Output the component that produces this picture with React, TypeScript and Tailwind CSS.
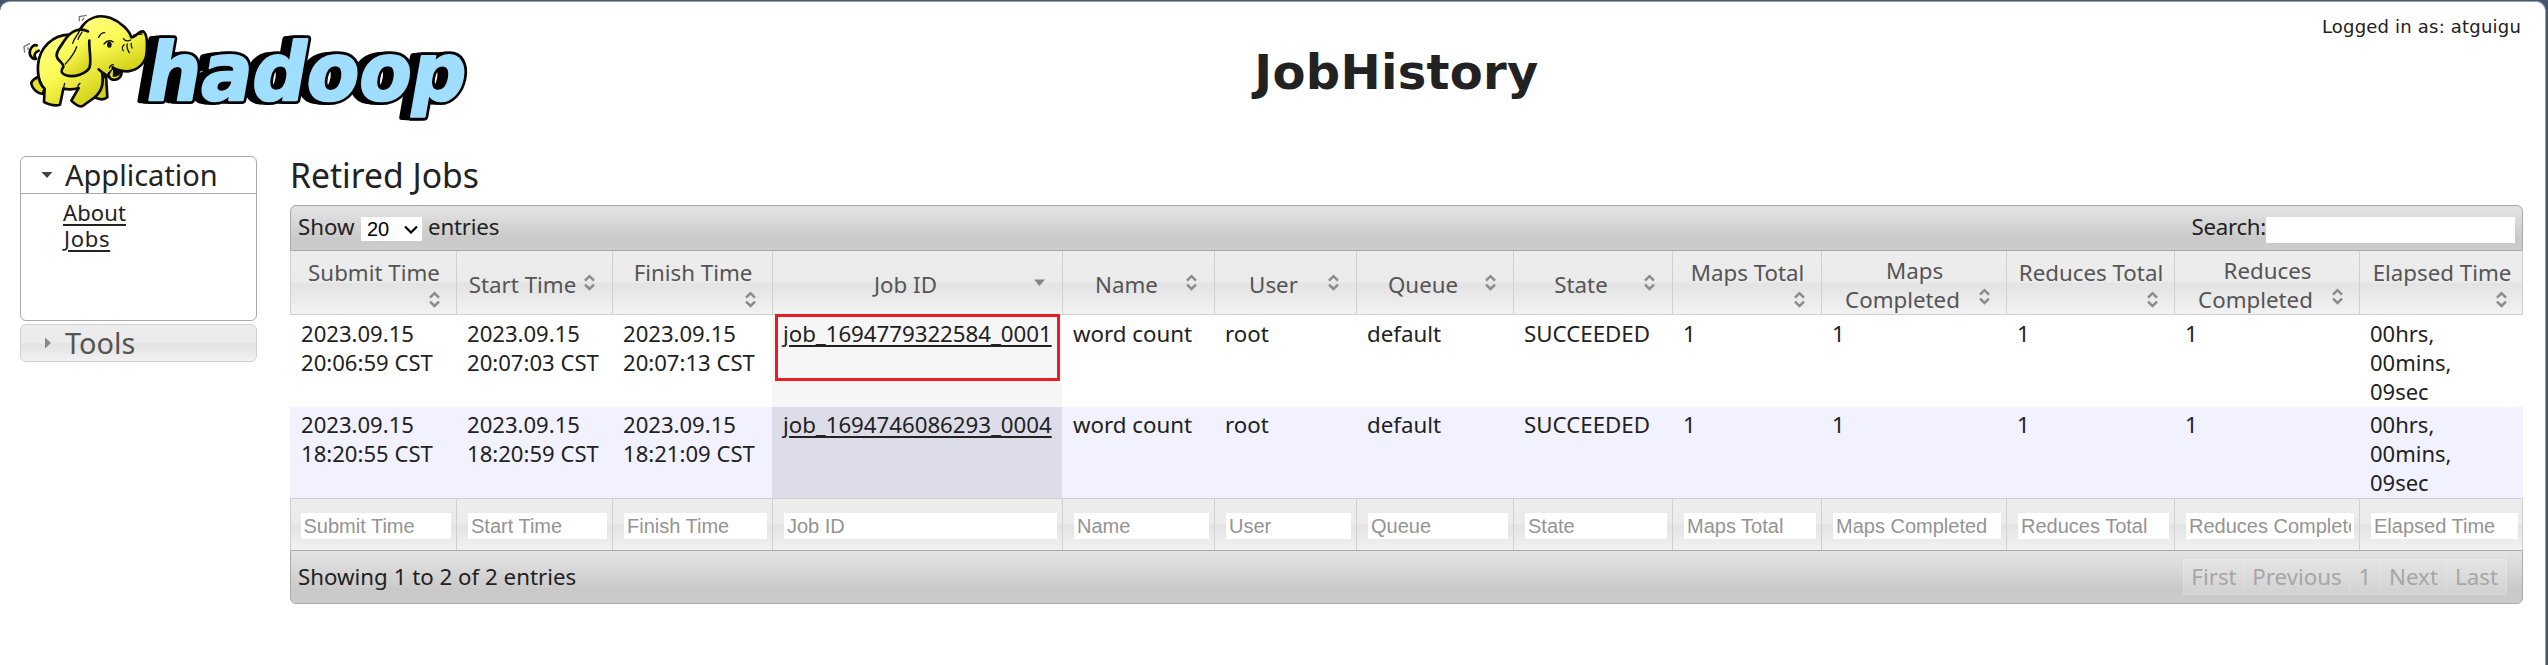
type Variant = "top" | "mid" | "wrap";

const columns: { label: string; variant: Variant }[] = [
  { label: "Submit Time", variant: "top" },
  { label: "Start Time", variant: "mid" },
  { label: "Finish Time", variant: "top" },
  { label: "Job ID", variant: "mid" },
  { label: "Name", variant: "mid" },
  { label: "User", variant: "mid" },
  { label: "Queue", variant: "mid" },
  { label: "State", variant: "mid" },
  { label: "Maps Total", variant: "top" },
  { label: "Maps Completed", variant: "wrap" },
  { label: "Reduces Total", variant: "top" },
  { label: "Reduces Completed", variant: "wrap" },
  { label: "Elapsed Time", variant: "top" },
];

const rows = [
  ["2023.09.15 20:06:59 CST", "2023.09.15 20:07:03 CST", "2023.09.15 20:07:13 CST", "job_1694779322584_0001", "word count", "root", "default", "SUCCEEDED", "1", "1", "1", "1", "00hrs, 00mins, 09sec"],
  ["2023.09.15 18:20:55 CST", "2023.09.15 18:20:59 CST", "2023.09.15 18:21:09 CST", "job_1694746086293_0004", "word count", "root", "default", "SUCCEEDED", "1", "1", "1", "1", "00hrs, 00mins, 09sec"],
];

const GRID = "grid grid-cols-[166px_156px_160px_290px_152px_142px_157px_159px_149px_185px_168px_185px_164px]";
const STRIPE = "bg-[linear-gradient(#ededed_0%,#ebebeb_49%,#e3e3e3_52%,#e9e9e9_72%,#f2f2f2_100%)]";
const BAR = "bg-[linear-gradient(#e3e3e3_0%,#dadada_30%,#c9c9c9_75%,#cccccc_100%)]";

function SortIcon() {
  return (
    <svg width="13" height="17" viewBox="0 0 13 17" className="block" fill="none" stroke="#8b8b8b" strokeWidth="2.5">
      <path d="M2 6.6 6.5 2.2 11 6.6M2 10.6 6.5 15 11 10.6" />
    </svg>
  );
}

function DownIcon() {
  return (
    <svg width="13" height="17" viewBox="0 0 13 17" className="block">
      <path d="M1 5.5H12L6.500 12Z" fill="#858585" />
    </svg>
  );
}

function HeaderCell({ label, variant, active }: { label: string; variant: Variant; active: boolean }) {
  const icon = active ? <DownIcon /> : <SortIcon />;
  if (variant === "top") {
    return (
      <div className="flex flex-col border-l border-[#d0d0d0] pt-[7px]">
        <div className="pl-px text-center">{label}</div>
        <div className="mt-[4px] mr-[15px] self-end">{icon}</div>
      </div>
    );
  }
  if (variant === "mid") {
    return (
      <div className="flex items-start border-l border-[#d0d0d0] pt-[19px]">
        <div className="flex-1 pl-[5px] text-center">{label}</div>
        <div className="mt-[3.500px] mr-4">{icon}</div>
      </div>
    );
  }
  const [a, b] = label.split(" ");
  return (
    <div className="flex flex-col border-l border-[#d0d0d0] pt-[5px]">
      <div className="pl-px text-center">{a}</div>
      <div className="flex">
        <div className="flex-1 pl-[5px] text-center">{b}</div>
        <div className="mt-[3px] mr-[15px]">{icon}</div>
      </div>
    </div>
  );
}

function Logo() {
  const word = {
    x: 430,
    y: 301,
    fontSize: 240,
    fontWeight: 700,
    fontFamily: "DejaVu Sans",
    textLength: 958,
    lengthAdjust: "spacingAndGlyphs" as const,
  };
  return (
    <svg width="500" height="140" viewBox="0 0 1500 420" className="block overflow-visible">
      <defs>
        <linearGradient id="skin" x1="0" y1="0" x2="0.6" y2="1">
          <stop offset="0" stopColor="#ffff8c" />
          <stop offset="0.55" stopColor="#fafa55" />
          <stop offset="1" stopColor="#d6d41c" />
        </linearGradient>
      </defs>
      <g transform="translate(52 0) skewX(-10)" strokeLinejoin="round">
        <text {...word} x={404} fill="#000" stroke="#000" strokeWidth="20">hadoop</text>
        <text {...word} x={417} fill="#000" stroke="#000" strokeWidth="22">hadoop</text>
        <text {...word} fill="#000" stroke="#000" strokeWidth="24">hadoop</text>
        <text {...word} fill="#9fdeff" stroke="#9fdeff" strokeWidth="7">hadoop</text>
      </g>
      <g stroke="#0b0b0b" strokeWidth="8" strokeLinejoin="round" strokeLinecap="round" fill="url(#skin)">
        <path d="M116 152C104 156 100 168 108 176C98 180 86 166 90 152C93 140 102 134 110 136" />
        <path d="M118 230C108 232 92 244 94 252C98 268 112 280 128 282L140 250Z" fill="#e2e02c" />
        <path d="M318 226L322 292C312 300 296 298 284 292L300 240Z" fill="#d2d01e" />
        <path d="M206 104C160 106 118 140 114 196C112 236 124 258 134 266L132 306C148 314 168 318 180 314L190 266C208 270 224 268 236 264L214 302C226 314 238 322 248 318L284 292C306 272 312 252 306 214L250 150Z" />
        <path d="M334 206C328 218 322 224 326 230C336 244 358 242 364 224L366 206Z" fill="#e2e02c" />
        <path d="M340 202L366 212C362 224 352 232 338 230Z" fill="#0b0b0b" stroke="none" />
        <path d="M206 104C222 96 236 90 244 76C268 48 300 42 332 54C362 66 388 90 394 112C408 112 414 94 428 94C440 98 442 128 440 156C438 190 414 210 384 214C364 214 350 210 338 202C326 220 318 224 296 212L258 190Z" stroke="none" />
        <path d="M240 88C262 52 296 42 332 54C362 66 388 90 394 112C408 112 414 94 428 94C440 98 442 128 440 156C438 190 414 210 384 214C364 214 350 210 338 202M328 230C314 222 304 216 296 208" fill="none" />
        <path d="M264 94C240 82 214 92 196 118C180 142 164 160 172 174C178 184 190 190 190 200C182 212 182 220 198 226C224 234 258 220 268 204C276 186 266 144 268 122" />
      </g>
      <g fill="none" stroke="#111" strokeWidth="4" strokeLinecap="round">
        <path d="M296 112C300 104 308 98 314 98M312 132C320 122 330 120 340 126M370 116C376 124 384 124 392 120M372 134C366 140 366 148 370 152M382 132C378 142 382 148 388 158M394 130C392 136 394 140 396 144M328 204C330 198 334 194 340 194M238 94C232 106 222 116 218 130M246 96C242 104 236 110 234 118M196 192C208 178 222 164 230 140" />
        <path d="M190 266L194 250M236 264C232 258 234 254 240 250M400 106C410 102 418 104 426 102" />
      </g>
      <ellipse cx="328" cy="134" rx="7" ry="9" fill="#111" />
      <g fill="none" stroke="#777" strokeWidth="4">
        <path d="M238 64V50L260 46M246 62L252 54M74 158L72 140L90 130M84 150V142" />
      </g>
    </svg>
  );
}

function Field({ label, first }: { label: string; first: boolean }) {
  return (
    <div className={`flex border-l border-[#d0d0d0] pt-[14px] pr-[5px] ${first ? "pl-[9.500px]" : "pl-[11px]"}`}>
      <div className="h-[26px] w-full overflow-hidden bg-white px-[3px] font-['Liberation_Sans',sans-serif] text-[20px] leading-[26px] whitespace-nowrap text-[#949494]">
        <div className="overflow-hidden">{label}</div>
      </div>
    </div>
  );
}

export default function App() {
  return (
    <div className="h-[665px] w-[2548px] overflow-hidden bg-[#44546a] pt-[1px] pr-[2px] font-['Noto_Sans',sans-serif] text-[22.3px] leading-[29px] text-[#222]">
      <div className="h-[664px] rounded-t-[10px] border-t border-r border-[#9aa3b0] bg-white">
        <header className="-mt-0.5 flex h-[140px] items-start">
          <div className="w-[500px]">
            <Logo />
          </div>
          <h1 className="w-[1793px] pt-[44px] text-center font-['DejaVu_Sans',sans-serif] text-[48px] leading-[56px] font-bold tracking-[0.3px]">JobHistory</h1>
          <div className="flex-1 pt-[14px] pr-[24px] text-right font-['DejaVu_Sans',sans-serif] text-[18px] leading-[26px] tracking-[0.2px] whitespace-nowrap">
            Logged in as: atguigu
          </div>
        </header>

        <div className="flex">
          <aside className="mt-[16px] ml-[20px] w-[237px]">
            <div className="h-[165px] rounded-[6px] border border-[#a9a9a9]">
              <div className="flex h-[37px] items-center border-b border-[#a9a9a9] pl-[20px] text-[29px] leading-[36px]">
                <svg width="12" height="8" viewBox="0 0 12 8" className="mr-[12px]">
                  <path d="M0.500 1H11.500L6 7Z" fill="#454545" />
                </svg>
                Application
              </div>
              <div className="flex flex-col items-start pt-[5px] pl-[42px] text-[22px] leading-[26px]">
                <a className="tracking-[0.1px] underline decoration-2 underline-offset-[3px]">About</a>
                <a className="pl-px tracking-[0.7px] underline decoration-2 underline-offset-[3px]">Jobs</a>
              </div>
            </div>
            <div className={`${STRIPE} mt-[3px] flex h-[38px] items-center rounded-[6px] border border-[#d0d0d0] pl-[23px] text-[28.900px] leading-[36px] text-[#555]`}>
              <svg width="8" height="12" viewBox="0 0 8 12" className="mr-[13px]">
                <path d="M1 0.500V11.500L7 6Z" fill="#888" />
              </svg>
              Tools
            </div>
          </aside>

          <main className="ml-[33px] w-[2233px]">
            <h2 className="h-[65px] pt-[12px] text-[33.700px] leading-[46px]">Retired Jobs</h2>

            <div className={`${BAR} flex h-[46px] items-start justify-between rounded-t-[6px] border border-[#a9a9a9] pr-[7px] pl-[7px]`}>
              <div className="flex pt-[6px]">
                <span className="w-[63px]">Show</span>
                <div className="mt-[5px] flex h-[24px] w-[61px] items-center justify-between bg-white pr-[4px] pl-[6px] font-['Liberation_Sans',sans-serif] text-[20px] leading-[24px] text-black">
                  20
                  <svg width="14" height="9" viewBox="0 0 14 9" fill="none" stroke="#000" strokeWidth="2.2">
                    <path d="M1 1.500 7 7.500 13 1.500" />
                  </svg>
                </div>
                <span className="pl-[6px] tracking-[-0.2px]">entries</span>
              </div>
              <div className="flex pt-[6px]">
                <span className="tracking-[-0.300px]">Search:</span>
                <div className="mt-[5px] h-[26px] w-[249px] bg-white" />
              </div>
            </div>

            <div className={`${GRID} ${STRIPE} h-[64px] border-r border-b border-[#d0d0d0] text-[#555]`}>
              {columns.map((c) => (
                <HeaderCell key={c.label} label={c.label} variant={c.variant} active={c.label === "Job ID"} />
              ))}
            </div>

            {rows.map((r, i) => (
              <div key={r[3]} className={i === 0 ? `${GRID} h-[92px] bg-white` : `${GRID} h-[91px] bg-[#f1f1ff]`}>
                {r.map((v, j) => {
                  const pad = i === 0 ? "pt-[4px]" : "pt-[3px]";
                  if (j === 3) {
                    return (
                      <div key={j} className={`${pad} relative pl-[11px] ${i === 0 ? "bg-[#f6f6f6]" : "bg-[#dddde9]"}`}>
                        <a className="tracking-[-0.04px] underline decoration-2 underline-offset-[3px]">{v}</a>
                        {i === 0 && <div className="absolute -top-px left-[3px] h-[67px] w-[285px] border-[3px] border-[#ed1c24]" />}
                      </div>
                    );
                  }
                  if (j < 3) {
                    const at = v.indexOf(" ");
                    return (
                      <div key={j} className={`${pad} pl-[11px] text-[22.1px] whitespace-nowrap`}>
                        <div>{v.slice(0, at)}</div>
                        <div>{v.slice(at + 1)}</div>
                      </div>
                    );
                  }
                  if (j === 12) {
                    return (
                      <div key={j} className={`${pad} pl-[11px] text-[22px]`}>
                        {v.split(" ").map((p) => (
                          <div key={p}>{p}</div>
                        ))}
                      </div>
                    );
                  }
                  return (
                    <div key={j} className={`${pad} pl-[11px] whitespace-nowrap`}>
                      {v}
                    </div>
                  );
                })}
              </div>
            ))}

            <div className={`${GRID} ${STRIPE} h-[52px] border-t border-r border-[#d0d0d0]`}>
              {columns.map((c, i) => (
                <Field key={c.label} label={c.label} first={i === 0} />
              ))}
            </div>

            <div className={`${BAR} flex h-[54px] items-start justify-between rounded-b-[6px] border border-[#a9a9a9] pr-[15px] pl-[7px]`}>
              <div className="pt-[11px]">Showing 1 to 2 of 2 entries</div>
              <div className="mt-[8px] flex h-[36px] bg-white/20 leading-[34px] text-[#a6a6a6]">
                <span className="w-[61px] border border-r-0 border-white/15 text-center">First</span>
                <span className="w-[105px] border border-r-0 border-white/15 text-center">Previous</span>
                <span className="w-[31px] border border-r-0 border-white/15 text-center">1</span>
                <span className="w-[66px] border border-r-0 border-white/15 text-center">Next</span>
                <span className="w-[61px] border border-white/15 text-center">Last</span>
              </div>
            </div>
          </main>
        </div>
      </div>
    </div>
  );
}
